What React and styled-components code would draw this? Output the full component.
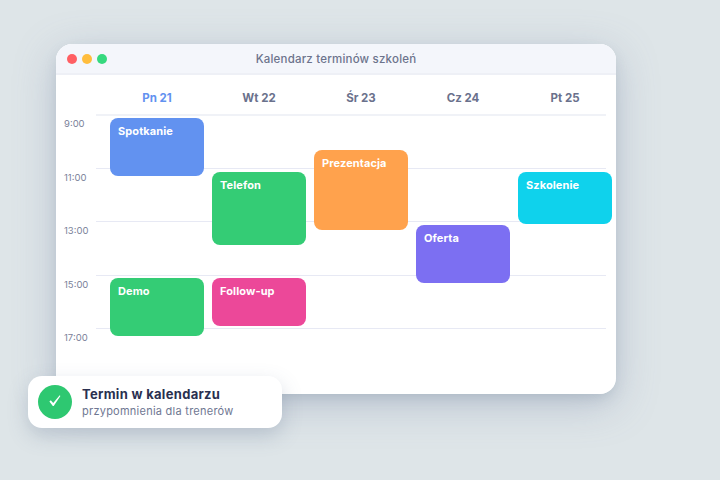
import styled, { createGlobalStyle } from "styled-components";

const GlobalStyle = createGlobalStyle`
    html, body {
        margin: 0;
        padding: 0;
    }
    body {
        width: 720px;
        height: 480px;
        overflow: hidden;
        background: #dee5e8;
        font-family: Inter, "Noto Sans", sans-serif;
    }
`;

const Stage = styled.div`
    position: relative;
    width: 720px;
    height: 480px;
    box-sizing: border-box;
    padding: 44px 104px 86px 56px;
`;

const Window = styled.div`
    height: 350px;
    background: #fff;
    border-radius: 16px;
    overflow: hidden;
`;

const WindowShadow = styled.div`
    border-radius: 16px;
    box-shadow: 0 10px 40px rgba(110, 122, 160, 0.34), 0 6px 14px -4px rgba(150, 170, 178, 0.45);
`;

const TitleBar = styled.div`
    display: grid;
    grid-template-columns: 1fr auto 1fr;
    align-items: center;
    height: 29px;
    padding: 0 11px;
    background: #f4f6fb;
    border-bottom: 2px solid #eef0f6;
`;

const Dots = styled.div`
    display: flex;
    gap: 5px;
`;

const Dot = styled.span`
    width: 10px;
    height: 10px;
    border-radius: 50%;
    background: ${props => props.$color};
`;

const Title = styled.div`
    font-size: 11.5px;
    font-weight: 500;
    color: #6c738c;
    letter-spacing: 0.2px;
`;

const DayRow = styled.div`
    display: grid;
    grid-template-columns: repeat(5, 102px);
    box-sizing: border-box;
    padding: 6px 0 0 50px;
    height: 39px;
    align-items: center;
`;

const Day = styled.div`
    text-align: center;
    font-size: 11.5px;
    font-weight: 700;
    color: ${props => (props.$active ? "#6292f0" : "#6a718c")};
`;

const Grid = styled.div`
    position: relative;
`;

const HourRow = styled.div`
    display: flex;
    height: 53.5px;
    padding: 0 10px 0 8px;
`;

const Hour = styled.div`
    width: 32px;
    padding-top: 4px;
    font-size: 9.5px;
    line-height: 12px;
    color: #7b829a;
`;

const HourLine = styled.div`
    flex: 1;
    height: 0;
    border-top: ${props => (props.$first ? "2px solid #f0f2f7" : "1px solid #e7e9f4")};
`;

const EventLayer = styled.div`
    position: absolute;
    inset: 0 0 0 50px;
    display: grid;
    grid-template-columns: repeat(5, 102px);
`;

const DayColumn = styled.div`
    position: relative;
`;

const Event = styled.div`
    position: absolute;
    left: 4px;
    right: 4px;
    top: ${props => props.$top}px;
    height: ${props => props.$height}px;
    box-sizing: border-box;
    padding: 6px 8px;
    border-radius: 8px;
    background: ${props => props.$color};
    color: #fff;
    font-size: 11px;
    line-height: 14px;
    font-weight: 700;
    letter-spacing: 0.1px;
`;

const Toast = styled.div`
    position: absolute;
    left: 28px;
    top: 376px;
    width: 254px;
    height: 52px;
    box-sizing: border-box;
    padding: 0 10px;
    display: flex;
    align-items: center;
    gap: 10px;
    background: #fff;
    border-radius: 14px;
    box-shadow: 0 8px 20px rgba(90, 108, 140, 0.26);
`;

const ToastIcon = styled.div`
    width: 34px;
    height: 34px;
    border-radius: 50%;
    background: #2ec871;
    display: flex;
    align-items: center;
    justify-content: center;
`;

const CheckMark = styled.svg`
    margin-bottom: 3px;
`;

const ToastTitle = styled.div`
    font-size: 13px;
    line-height: 16px;
    font-weight: 700;
    letter-spacing: 0.3px;
    color: #2a3050;
`;

const ToastText = styled.div`
    margin-top: 3px;
    font-size: 11px;
    line-height: 13px;
    letter-spacing: 0.25px;
    color: #6f7792;
`;

const hours = ["9:00", "11:00", "13:00", "15:00", "17:00"];

const days = [
    {
        label: "Pn 21",
        active: true,
        events: [
            { name: "Spotkanie", top: 4, height: 58, color: "#6292f0" },
            { name: "Demo", top: 164, height: 58, color: "#34cc75" },
        ],
    },
    {
        label: "Wt 22",
        events: [
            { name: "Telefon", top: 57.5, height: 73.5, color: "#34cc75" },
            { name: "Follow-up", top: 164, height: 48, color: "#ec4899" },
        ],
    },
    {
        label: "Śr 23",
        events: [{ name: "Prezentacja", top: 36, height: 79.5, color: "#ffa24d" }],
    },
    {
        label: "Cz 24",
        events: [{ name: "Oferta", top: 111, height: 58, color: "#7c6ff2" }],
    },
    {
        label: "Pt 25",
        events: [{ name: "Szkolenie", top: 57.5, height: 52.5, color: "#0fd2ec" }],
    },
];

const App = () => {
    return (
        <Stage>
            <GlobalStyle />
            <WindowShadow>
                <Window>
                    <TitleBar>
                        <Dots>
                            <Dot $color="#ff5f63" />
                            <Dot $color="#ffbd3d" />
                            <Dot $color="#36d97e" />
                        </Dots>
                        <Title>Kalendarz terminów szkoleń</Title>
                    </TitleBar>
                    <DayRow>
                        {days.map(day => (
                            <Day key={day.label} $active={day.active}>{day.label}</Day>
                        ))}
                    </DayRow>
                    <Grid>
                        {hours.map((hour, i) => (
                            <HourRow key={hour}>
                                <Hour>{hour}</Hour>
                                <HourLine $first={i === 0} />
                            </HourRow>
                        ))}
                        <EventLayer>
                            {days.map(day => (
                                <DayColumn key={day.label}>
                                    {day.events.map(event => (
                                        <Event key={event.name} $top={event.top} $height={event.height} $color={event.color}>
                                            {event.name}
                                        </Event>
                                    ))}
                                </DayColumn>
                            ))}
                        </EventLayer>
                    </Grid>
                </Window>
            </WindowShadow>
            <Toast>
                <ToastIcon>
                    <CheckMark width="12" height="12" viewBox="0 0 12 12">
                        <path d="M0.4 6.6 L1.8 5.3 L4.2 8 L10.7 0.3 L11.4 0.9 L4.7 11 L3.8 11 Z" fill="#fff" />
                    </CheckMark>
                </ToastIcon>
                <div>
                    <ToastTitle>Termin w kalendarzu</ToastTitle>
                    <ToastText>przypomnienia dla trenerów</ToastText>
                </div>
            </Toast>
        </Stage>
    );
};

export default App;
